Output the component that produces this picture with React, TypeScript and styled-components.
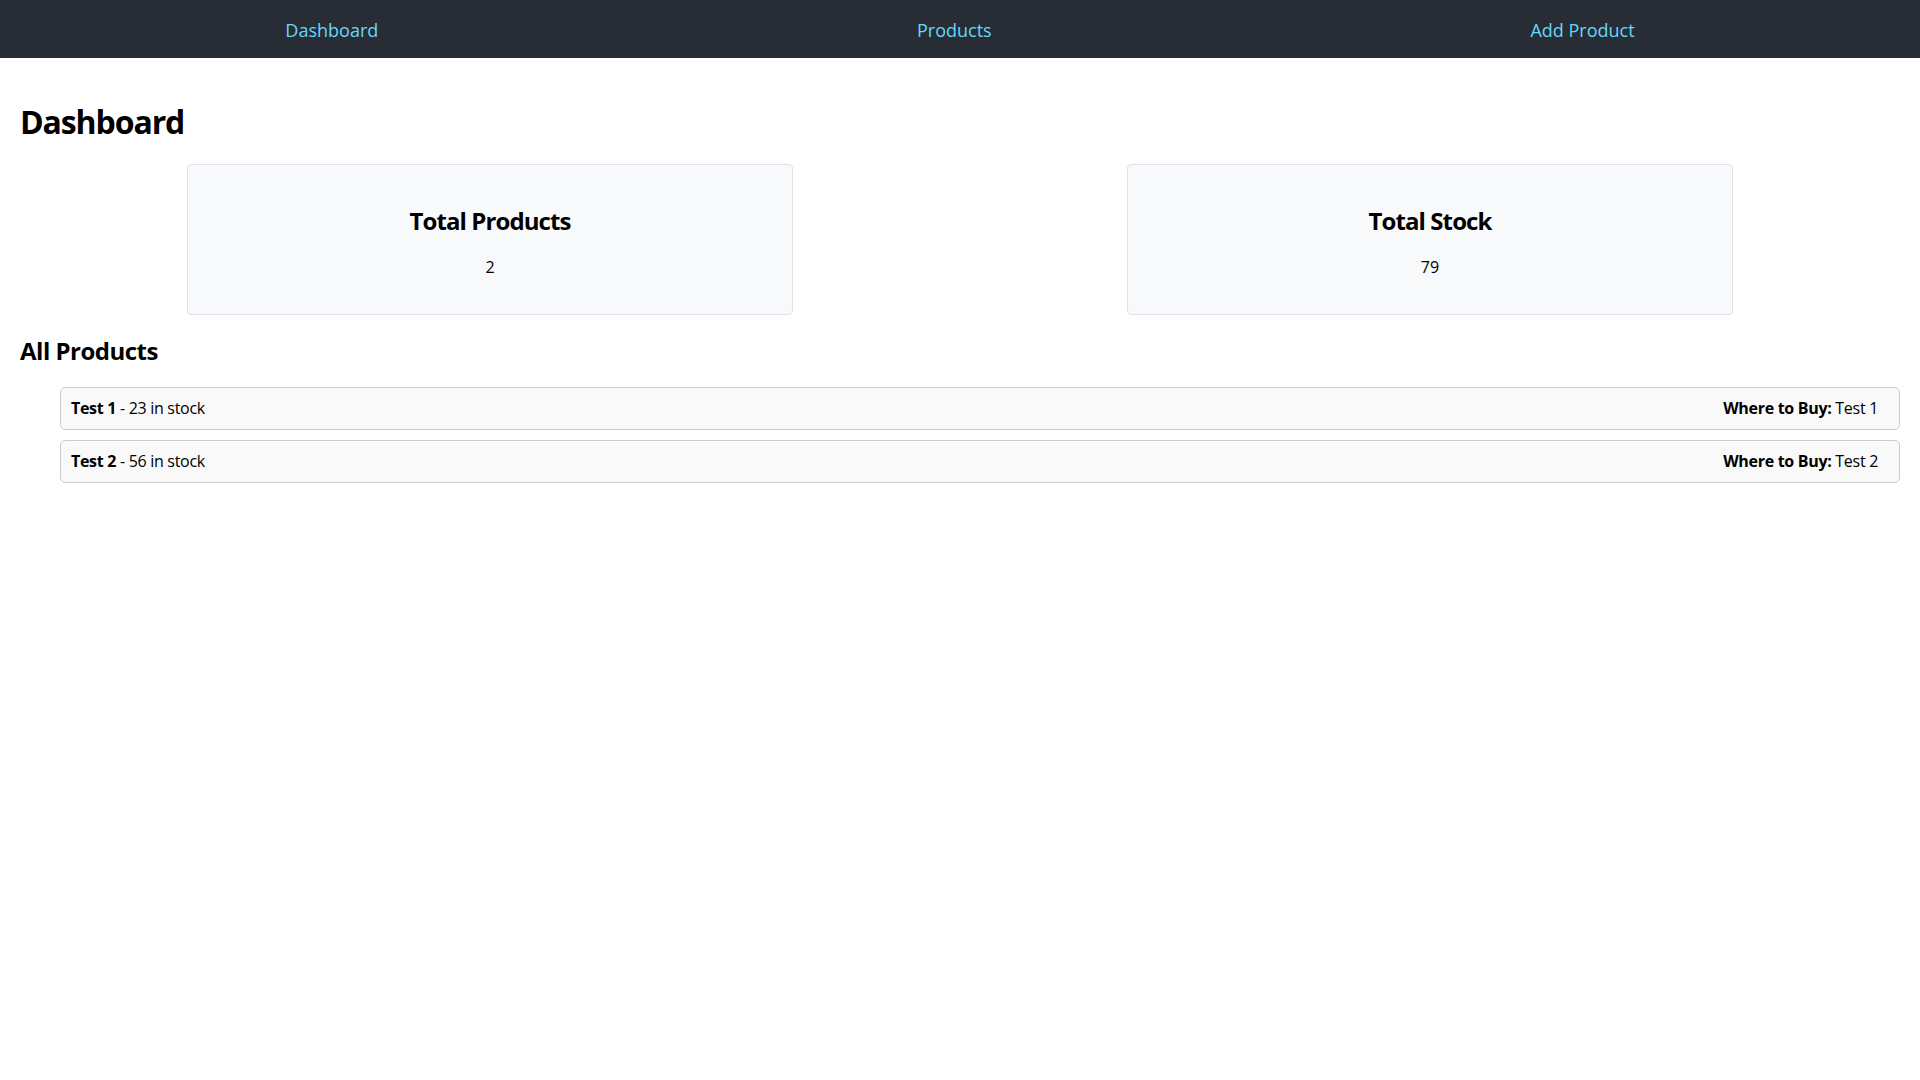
import React from "react";
import styled, { createGlobalStyle } from "styled-components";

const GlobalStyle = createGlobalStyle`
  body {
    margin: 0;
    font-family: "Open Sans", "Noto Sans", "Liberation Sans", sans-serif;
    line-height: 1.33;
    color: #000;
    background: #fff;
  }
`;

const NavBar = styled.nav`
  background: #282c34;
  height: 58px;
  box-sizing: border-box;
  padding: 4px 16px 0;
  display: flex;
  align-items: center;
  justify-content: space-around;
`;

const NavLink = styled.a`
  color: #61dafb;
  font-size: 18px;
  text-decoration: none;
`;

const Page = styled.main`
  padding: 21px 20px 20px;
`;

const Title = styled.h1`
  font-size: 32px;
  font-weight: 700;
  margin: 21.44px 0 20px;
  padding-top: 1px;
  line-height: 42.5px;
  letter-spacing: -1.1px;
`;

const Stats = styled.div`
  display: flex;
  justify-content: space-around;
`;

const Card = styled.div`
  width: 30%;
  padding: 20px;
  background: #f8f9fa;
  border: 1px solid #dee2e6;
  border-radius: 4px;
  text-align: center;
`;

const CardTitle = styled.h2`
  font-size: 24px;
  font-weight: 700;
  margin: 19.92px 0;
  line-height: 32px;
  letter-spacing: -0.9px;
`;

const CardValue = styled.p`
  font-size: 16px;
  margin: 16px 0;
  line-height: 21px;
`;

const SectionTitle = styled.h2`
  font-size: 24px;
  font-weight: 700;
  margin: 19.92px 0;
  line-height: 32px;
  letter-spacing: -0.5px;
`;

const List = styled.ul`
  list-style: none;
  margin: 16px 0;
  padding-left: 40px;
`;

const Item = styled.li`
  display: flex;
  justify-content: space-between;
  align-items: center;
  padding: 10px 21px 10px 10px;
  margin-bottom: 10px;
  background: #f9f9f9;
  border: 1px solid #ccc;
  border-radius: 5px;
  font-size: 16px;
  line-height: 21px;
  letter-spacing: -0.3px;
`;

const Strong = styled.strong`
  font-weight: 700;
`;

const products = [
  { name: "Test 1", stock: 23, where: "Test 1" },
  { name: "Test 2", stock: 56, where: "Test 2" },
];

export default function App() {
  const total = products.reduce((s, p) => s + p.stock, 0);
  return (
    <>
      <GlobalStyle />
      <NavBar>
        <NavLink href="#">Dashboard</NavLink>
        <NavLink href="#">Products</NavLink>
        <NavLink href="#">Add Product</NavLink>
      </NavBar>
      <Page>
        <Title>Dashboard</Title>
        <Stats>
          <Card>
            <CardTitle>Total Products</CardTitle>
            <CardValue>{products.length}</CardValue>
          </Card>
          <Card>
            <CardTitle>Total Stock</CardTitle>
            <CardValue>{total}</CardValue>
          </Card>
        </Stats>
        <SectionTitle>All Products</SectionTitle>
        <List>
          {products.map((p) => (
            <Item key={p.name}>
              <span>
                <Strong>{p.name}</Strong> - {p.stock} in stock
              </span>
              <span>
                <Strong>Where to Buy:</Strong> {p.where}
              </span>
            </Item>
          ))}
        </List>
      </Page>
    </>
  );
}
